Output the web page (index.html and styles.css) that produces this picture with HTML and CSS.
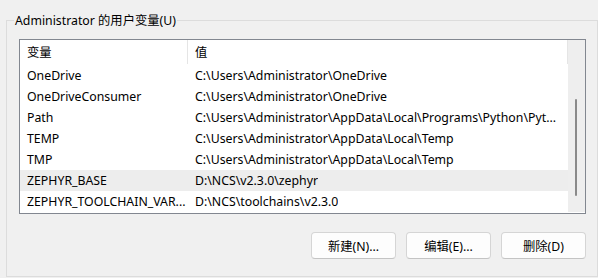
FILE: index.html
```html
<!DOCTYPE html>
<html lang="zh-CN">
<head>
<meta charset="utf-8">
<title>Administrator 的用户变量</title>
<link rel="stylesheet" href="styles.css">
</head>
<body>
<fieldset class="group">
  <legend class="group-title">Administrator 的用户变量(U)</legend>
  <div class="list">
    <div class="list-body">
      <div class="list-header">
        <div class="col col-name">变量</div>
        <div class="col col-value">值</div>
      </div>
      <div class="row"><div class="col col-name">OneDrive</div><div class="col col-value">C:\Users\Administrator\OneDrive</div></div>
      <div class="row"><div class="col col-name">OneDriveConsumer</div><div class="col col-value">C:\Users\Administrator\OneDrive</div></div>
      <div class="row"><div class="col col-name">Path</div><div class="col col-value">C:\Users\Administrator\AppData\Local\Programs\Python\Pyt...</div></div>
      <div class="row"><div class="col col-name">TEMP</div><div class="col col-value">C:\Users\Administrator\AppData\Local\Temp</div></div>
      <div class="row"><div class="col col-name">TMP</div><div class="col col-value">C:\Users\Administrator\AppData\Local\Temp</div></div>
      <div class="row row-hover"><div class="col col-name">ZEPHYR_BASE</div><div class="col col-value">D:\NCS\v2.3.0\zephyr</div></div>
      <div class="row"><div class="col col-name">ZEPHYR_TOOLCHAIN_VAR...</div><div class="col col-value">D:\NCS\toolchains\v2.3.0</div></div>
    </div>
    <div class="scrollbar"><div class="thumb"></div></div>
  </div>
  <div class="buttons">
    <button class="btn">新建(N)...</button>
    <button class="btn">编辑(E)...</button>
    <button class="btn">删除(D)</button>
  </div>
</fieldset>
</body>
</html>
```
FILE: styles.css
```css
html, body {
  margin: 0;
  padding: 0;
  background: #f0f0f0;
}
body {
  width: 598px;
  height: 278px;
  overflow: hidden;
  font-family: "Noto Sans", "Noto Sans CJK SC", sans-serif;
  font-size: 12.3px;
  color: #000;
  padding-top: 12px;
  box-sizing: border-box;
}
.group {
  margin: 0 0 0 6px;
  width: 592px;
  height: 265px;
  box-sizing: border-box;
  border: 1px solid #dcdcdc;
  padding: 0 11px 0 12px;
  min-width: 0;
}
.group-title {
  margin-left: -5px;
  padding: 0 1px;
  line-height: 17px;
  font-size: 12.3px;
}
.list {
  margin-top: 10px;
  height: 175px;
  box-sizing: border-box;
  border: 1px solid #828790;
  background: #fff;
  display: flex;
}
.list-body {
  flex: 1;
  min-width: 0;
}
.list-header {
  display: flex;
  height: 25px;
  align-items: stretch;
}
.list-header .col {
  border-right: 1px solid #e5e5e5;
  height: 24px;
}
.list-header .col-value {
  flex: 1;
}
.col {
  display: flex;
  align-items: center;
  padding-left: 7px;
  box-sizing: border-box;
  white-space: nowrap;
  overflow: hidden;
}
.col-name {
  width: 168px;
  flex: none;
}
.row {
  display: flex;
  height: 21px;
}
.row-hover {
  background: #ededed;
}
.scrollbar {
  width: 17px;
  flex: none;
  background: #eeeeee;
  margin-bottom: 1px;
  display: flex;
  flex-direction: column;
  align-items: center;
}
.thumb {
  width: 2px;
  height: 97px;
  margin-top: 59px;
  margin-left: -1px;
  background: #8a8a8a;
  border-radius: 1px;
}
.buttons {
  display: flex;
  justify-content: flex-end;
  gap: 10px;
  margin-top: 18px;
}
.btn {
  width: 85px;
  height: 27px;
  box-sizing: border-box;
  border: 1px solid #d5d5d5;
  border-bottom-color: #c4c4c4;
  border-radius: 4px;
  background: #fdfdfd;
  font-family: "Noto Sans", "Noto Sans CJK SC", sans-serif;
  font-size: 12.3px;
  color: #000;
  padding: 0;
}
```
